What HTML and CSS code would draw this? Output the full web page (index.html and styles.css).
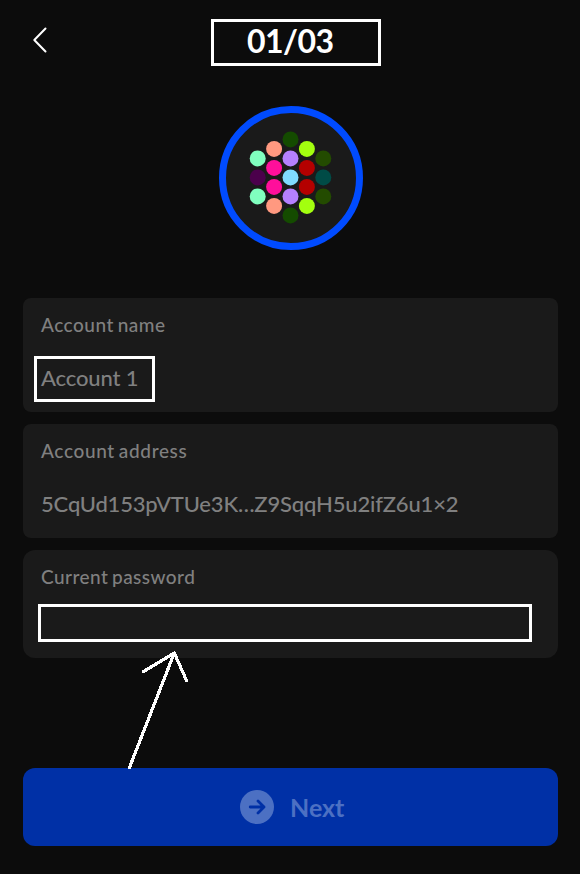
FILE: index.html
```html
<!DOCTYPE html>
<html lang="en">
<head>
<meta charset="utf-8">
<title>Account</title>
<link rel="stylesheet" href="styles.css">
</head>
<body>
<main class="screen">
  <header class="header">
    <svg class="back" width="16" height="28" viewBox="0 0 16 28"><path d="M13.500 2.500 2.300 14 13.500 25.500"/></svg>
    <div class="step"><span class="step-text">01/03</span></div>
  </header>
  <div class="avatar">
    <svg width="130" height="130" viewBox="-64.5 -64.4 130 130">
      <g fill="#144b00"><circle cy="-38" r="8"/><circle cy="38" r="8"/></g>
      <g fill="#b580ff"><circle cy="-19" r="8"/><circle cy="19" r="8"/></g>
      <circle r="8" fill="#80dcff"/>
      <g fill="#ff9980"><circle cx="-16.4" cy="-28.5" r="8"/><circle cx="-16.4" cy="28.5" r="8"/></g>
      <g fill="#ff0f9b"><circle cx="-16.4" cy="-9.5" r="8"/><circle cx="-16.4" cy="9.5" r="8"/></g>
      <g fill="#a3ff0f"><circle cx="16.4" cy="-28.5" r="8"/><circle cx="16.4" cy="28.5" r="8"/></g>
      <g fill="#b40000"><circle cx="16.4" cy="-9.5" r="8"/><circle cx="16.4" cy="9.5" r="8"/></g>
      <g fill="#80ffbf"><circle cx="-32.8" cy="-19" r="8"/><circle cx="-32.8" cy="19" r="8"/></g>
      <circle cx="-32.8" r="8" fill="#4b004b"/>
      <g fill="#234b00"><circle cx="32.8" cy="-19" r="8"/><circle cx="32.8" cy="19" r="8"/></g>
      <circle cx="32.8" r="8" fill="#004b46"/>
    </svg>
  </div>
  <section class="fields">
    <div class="card">
      <div class="label label-name">Account name</div>
      <div class="value marked"><span class="value-name">Account 1</span></div>
    </div>
    <div class="card">
      <div class="label label-address">Account address</div>
      <div class="value value-address">5CqUd153pVTUe3K…Z9SqqH5u2ifZ6u1×2</div>
    </div>
    <div class="card card-password">
      <div class="label label-password">Current password</div>
      <div class="password"></div>
    </div>
  </section>
  <button class="next">
    <svg width="34" height="34" viewBox="0 0 34 34"><circle cx="17" cy="17" r="17" fill="#4c70c3"/><path d="M10.2 17H24M18 11l6 6-6 6"/></svg>
    <span class="next-text">Next</span>
  </button>
  <svg class="pointer" width="50" height="122" viewBox="0 0 50 122" shape-rendering="crispEdges"><path d="M4.500 118.500 49.300 4M18.500 22.500 49.300 4 61.500 31.500"/></svg>
</main>
</body>
</html>
```
FILE: styles.css
```css
* { box-sizing: border-box; }
body { margin: 0; background: #0c0c0c; font-family: Lato, sans-serif; color: #fff; }
.screen { position: relative; width: 580px; height: 874px; padding: 19px 22px 28px 23px; display: flex; flex-direction: column; }
.header { display: flex; height: 47px; }
.back { margin: 7px 0 0 9px; fill: none; stroke: #fff; stroke-width: 2; stroke-linecap: round; stroke-linejoin: round; }
.step { margin-left: 163px; width: 170px; height: 47px; border: 3px solid #fff; padding-left: 33px; line-height: 37px; font-size: 32px; font-weight: 700; letter-spacing: -0.5px; white-space: nowrap; }
.avatar { width: 144px; height: 144px; margin: 40px 0 0 196px; border: 7px solid #004bff; border-radius: 50%; background: #1a1a1a; flex-shrink: 0; }
.avatar svg { display: block; }
.fields { display: flex; flex-direction: column; gap: 12px; margin-top: 48px; }
.card { height: 114px; border-radius: 8px; background: #1a1a1a; padding: 15px 18px; color: #808080; }
.card-password { height: 108px; border-radius: 12px; }
.label { height: 24px; line-height: 24px; font-size: 19px; font-weight: 500; word-spacing: -1.5px; white-space: nowrap; }
.label-name { letter-spacing: 0.5px; }
.label-address { letter-spacing: 0.65px; }
.label-password { letter-spacing: 0.45px; }
.value { height: 46px; margin-top: 19px; line-height: 44px; font-size: 22px; font-weight: 500; white-space: nowrap; }
.value-name { letter-spacing: -0.15px; }
.value-address { letter-spacing: -0.17px; }
.marked { width: 121px; margin-left: -7px; border: 3px solid #fff; padding-left: 4px; line-height: 38px; }
.password { width: 494px; height: 38px; margin: 15px 0 0 -3px; border: 3px solid #fff; }
.next { margin-top: 110px; width: 535px; height: 78px; border: 0; border-radius: 12px; background: #0030a6; padding: 0 0 0 217px; display: flex; align-items: center; gap: 16px; font-family: inherit; font-size: 25px; font-weight: 700; color: #4c70c3; }
.next path { fill: none; stroke: #0030a6; stroke-width: 2.8; stroke-linecap: round; stroke-linejoin: round; }
.pointer { position: absolute; left: 125px; top: 649px; overflow: visible; }
.pointer path { fill: none; stroke: #fff; stroke-width: 3.2; stroke-linecap: round; stroke-linejoin: round; }
```
